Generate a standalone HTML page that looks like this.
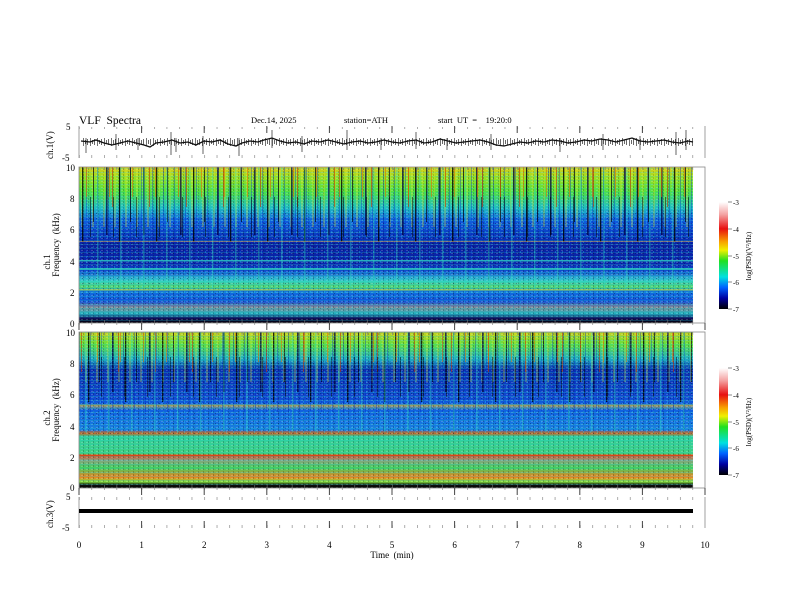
<!DOCTYPE html>
<html><head><meta charset="utf-8"><style>
html,body{margin:0;padding:0;background:#fff}
svg{display:block}
text{font-family:"Liberation Serif",serif;fill:#000;white-space:pre}
</style></head><body>
<svg width="792" height="612" viewBox="0 0 792 612" xmlns="http://www.w3.org/2000/svg" xml:space="preserve">
<defs>
<linearGradient id="cb" x1="0" y1="0" x2="0" y2="1">
<stop offset="0" stop-color="#fff"/><stop offset=".12" stop-color="#f4a0a0"/><stop offset=".25" stop-color="#e81010"/><stop offset=".37" stop-color="#f8a000"/><stop offset=".45" stop-color="#f0f000"/><stop offset=".55" stop-color="#20e020"/><stop offset=".7" stop-color="#00e0e0"/><stop offset=".8" stop-color="#0060ff"/><stop offset=".9" stop-color="#0000a0"/><stop offset="1" stop-color="#000"/>
</linearGradient>
<linearGradient id="s1" x1="0" y1="0" x2="0" y2="1">
<stop offset="0" stop-color="#d8c820"/><stop offset=".06" stop-color="#a0e020"/><stop offset=".16" stop-color="#50e040"/><stop offset=".26" stop-color="#20c0c0"/><stop offset=".34" stop-color="#1060e0"/><stop offset=".46" stop-color="#0830b8"/><stop offset=".5" stop-color="#0a20a0"/><stop offset=".62" stop-color="#0a28b0"/><stop offset=".67" stop-color="#1050d0"/><stop offset=".72" stop-color="#30c0d0"/><stop offset=".77" stop-color="#50d870"/><stop offset=".8" stop-color="#1070e0"/><stop offset=".86" stop-color="#1050d8"/><stop offset=".9" stop-color="#808c98"/><stop offset=".94" stop-color="#20b0c0"/><stop offset=".97" stop-color="#101060"/><stop offset="1" stop-color="#000"/>
</linearGradient>
<linearGradient id="s2" x1="0" y1="0" x2="0" y2="1">
<stop offset="0" stop-color="#c8d020"/><stop offset=".08" stop-color="#60e040"/><stop offset=".17" stop-color="#20b0c0"/><stop offset=".24" stop-color="#0a30b0"/><stop offset=".42" stop-color="#1048d0"/><stop offset=".46" stop-color="#1060e0"/><stop offset=".47" stop-color="#a0a060"/><stop offset=".5" stop-color="#1060e0"/><stop offset=".63" stop-color="#1880e0"/><stop offset=".645" stop-color="#e05010"/><stop offset=".67" stop-color="#30d0a0"/><stop offset=".78" stop-color="#40d080"/><stop offset=".79" stop-color="#e04010"/><stop offset=".82" stop-color="#90a080"/><stop offset=".87" stop-color="#40d060"/><stop offset=".93" stop-color="#f08020"/><stop offset=".96" stop-color="#80e040"/><stop offset=".98" stop-color="#101010"/><stop offset="1" stop-color="#000"/>
</linearGradient>
<pattern id="va" width="37" height="400" patternUnits="userSpaceOnUse" x="79" y="167"><rect x="3" width="1.3" height="75" fill="#000" opacity=".8"/><rect x="14" width="1" height="55" fill="#001" opacity=".7"/><rect x="27" width="1.6" height="68" fill="#000040" opacity=".75"/><rect x="33" width="1" height="40" fill="#c03000" opacity=".6"/></pattern>
<pattern id="vb" width="23" height="400" patternUnits="userSpaceOnUse" x="79" y="167"><rect x="7" width="1" height="30" fill="#e07000" opacity=".6"/><rect x="18" width="1.5" height="120" fill="#30e0c0" opacity=".35"/><rect x="11" y="30" width="1" height="40" fill="#000" opacity=".5"/></pattern>
<pattern id="vc" width="11" height="400" patternUnits="userSpaceOnUse" x="79" y="167"><rect x="2" width="2" height="60" fill="#f0f020" opacity=".25"/><rect x="7" width="1" height="90" fill="#0020c0" opacity=".35"/></pattern>
<pattern id="va2" width="37" height="400" patternUnits="userSpaceOnUse" x="85" y="332"><rect x="3" width="1.3" height="70" fill="#000" opacity=".8"/><rect x="14" width="1" height="50" fill="#001" opacity=".7"/><rect x="27" width="1.6" height="60" fill="#000040" opacity=".75"/><rect x="33" width="1" height="40" fill="#c03000" opacity=".6"/></pattern>
<pattern id="vb2" width="23" height="400" patternUnits="userSpaceOnUse" x="90" y="332"><rect x="7" width="1" height="30" fill="#e07000" opacity=".6"/><rect x="18" width="1.5" height="100" fill="#30e0c0" opacity=".35"/><rect x="11" y="25" width="1" height="40" fill="#000" opacity=".5"/></pattern>
<pattern id="vc2" width="11" height="400" patternUnits="userSpaceOnUse" x="83" y="332"><rect x="2" width="2" height="50" fill="#f0f020" opacity=".25"/><rect x="7" width="1" height="80" fill="#0020c0" opacity=".35"/></pattern>
<pattern id="h1" width="53" height="4" patternUnits="userSpaceOnUse"><rect width="53" height="1" fill="#20d0d0" opacity=".25"/></pattern>
<pattern id="n1" width="5" height="3" patternUnits="userSpaceOnUse"><rect x="1" y="1" width="2" height="1" fill="#fff" opacity=".18"/><rect x="3" y="0" width="1" height="2" fill="#000" opacity=".2"/></pattern>
<pattern id="n2" width="7" height="5" patternUnits="userSpaceOnUse"><rect x="2" y="1" width="1" height="2" fill="#30e0ff" opacity=".3"/><rect x="5" y="3" width="1" height="1" fill="#000030" opacity=".35"/></pattern>
<pattern id="mt" width="12.52" height="5" patternUnits="userSpaceOnUse" x="79"><rect width=".6" height="3" fill="#777"/></pattern>
<pattern id="mb" width="12.52" height="5" patternUnits="userSpaceOnUse" x="79" y="0"><rect y="2" width=".6" height="3" fill="#777"/></pattern>
<pattern id="jit" width="7" height="14" patternUnits="userSpaceOnUse" x="79" y="135"><rect x="1" y="4" width=".8" height="6" fill="#111"/><rect x="4" y="3" width=".8" height="8" fill="#222"/><rect x="6" y="5" width=".8" height="4" fill="#111"/></pattern>
</defs>

<text x="79" y="124" font-size="11.5">VLF  Spectra</text>
<text x="251" y="123" font-size="8.5">Dec.14, 2025</text>
<text x="344" y="123" font-size="8.5">station=ATH</text>
<text x="438" y="123" font-size="8.5">start  UT  =    19:20:0</text>

<g stroke="#888" stroke-width=".8" fill="none"><line x1="79" y1="126" x2="79" y2="158"/><line x1="705" y1="126" x2="705" y2="158"/></g>
<rect x="79" y="126" width="626" height="3" fill="url(#mb)"/>
<rect x="79" y="155" width="626" height="3" fill="url(#mt)"/>
<text x="66" y="130" font-size="9">5</text><text x="62" y="161" font-size="9">-5</text>
<text transform="translate(53,159) rotate(-90)" font-size="9">ch.1(V)</text>
<rect x="81" y="136" width="612" height="12" fill="url(#jit)" opacity=".8"/>
<polyline fill="none" stroke="#111" stroke-width="1.3" points="81,141 90,142 96,140 104,143 112,145 120,143 128,141 136,143 144,145 150,147 156,143 164,142 172,140 180,143 188,142 196,145 204,141 212,142 220,140 228,144 236,146 242,143 250,141 258,142 264,140 272,138 280,141 288,143 296,142 304,144 312,141 320,142 328,140 336,142 344,144 352,142 360,141 368,143 376,142 384,140 392,142 400,143 408,141 416,140 424,143 432,142 440,139 448,141 456,143 464,142 472,141 480,140 488,142 496,145 504,146 512,144 520,142 528,143 536,141 544,142 552,140 560,141 568,143 576,142 584,140 592,141 600,139 608,140 616,142 624,140 632,138 640,141 648,142 656,141 664,140 672,142 680,143 688,141 693,142"/>
<g stroke="#222" stroke-width=".7">
<line x1="86" y1="138" x2="86" y2="153"/><line x1="116" y1="134" x2="116" y2="150"/><line x1="138" y1="138" x2="138" y2="150"/><line x1="171" y1="132" x2="171" y2="155"/><line x1="176" y1="138" x2="176" y2="152"/><line x1="203" y1="136" x2="203" y2="154"/><line x1="239" y1="138" x2="239" y2="156"/><line x1="272" y1="130" x2="272" y2="148"/><line x1="302" y1="136" x2="302" y2="152"/><line x1="347" y1="130" x2="347" y2="150"/><line x1="381" y1="138" x2="381" y2="150"/><line x1="416" y1="132" x2="416" y2="149"/><line x1="447" y1="138" x2="447" y2="150"/><line x1="491" y1="134" x2="491" y2="150"/><line x1="560" y1="138" x2="560" y2="152"/><line x1="603" y1="134" x2="603" y2="150"/><line x1="640" y1="136" x2="640" y2="150"/><line x1="676" y1="132" x2="676" y2="155"/><line x1="686" y1="130" x2="686" y2="150"/>
</g>

<rect x="79" y="167" width="614" height="156" fill="url(#s1)"/>
<rect x="79" y="167" width="614" height="156" fill="url(#n1)"/>
<rect x="79" y="210" width="614" height="100" fill="url(#n2)"/>
<rect x="79" y="167" width="614" height="156" fill="url(#h1)"/>
<rect x="79" y="167" width="614" height="120" fill="url(#vc)"/>
<rect x="79" y="167" width="614" height="120" fill="url(#va)"/>
<rect x="79" y="167" width="614" height="120" fill="url(#vb)"/>
<g fill="#30d8c0" opacity=".7"><rect x="79" y="260" width="614" height="1.5"/><rect x="79" y="268" width="614" height="2"/><rect x="79" y="281" width="614" height="1.5"/></g>
<rect x="79" y="241" width="614" height="1" fill="#c0a060" opacity=".6"/>
<rect x="79" y="289" width="614" height="1.5" fill="#e0e030" opacity=".5"/>

<rect x="79" y="332" width="614" height="156" fill="url(#s2)"/>
<rect x="79" y="332" width="614" height="156" fill="url(#n1)"/>
<rect x="79" y="360" width="614" height="75" fill="url(#n2)"/>
<rect x="79" y="332" width="614" height="100" fill="url(#vc2)"/>
<rect x="79" y="332" width="614" height="100" fill="url(#va2)"/>
<rect x="79" y="332" width="614" height="100" fill="url(#vb2)"/>
<rect x="79" y="332" width="614" height="156" fill="url(#h1)"/>
<g fill="none" stroke="#888" stroke-width=".8">
<rect x="79" y="167" width="626" height="156"/><rect x="79" y="332" width="626" height="156"/>
<line x1="79" y1="497" x2="79" y2="528"/><line x1="705" y1="497" x2="705" y2="528"/>
</g>
<rect x="79" y="167" width="626" height="3" fill="url(#mb)"/><rect x="79" y="320" width="626" height="3" fill="url(#mt)"/>
<rect x="79" y="332" width="626" height="3" fill="url(#mb)"/><rect x="79" y="485" width="626" height="3" fill="url(#mt)"/>
<rect x="79" y="497" width="626" height="3" fill="url(#mb)"/><rect x="79" y="525" width="626" height="3" fill="url(#mt)"/>
<rect x="79" y="323" width="626" height="3" fill="url(#mb)"/><rect x="79" y="488" width="626" height="3" fill="url(#mb)"/>
<g stroke="#444" stroke-width="1">
<path d="M79 323v7M141.6 323v7M204.2 323v7M266.8 323v7M329.4 323v7M392 323v7M454.6 323v7M517.2 323v7M579.8 323v7M642.4 323v7M705 323v7"/>
<path d="M79 488v7M141.6 488v7M204.2 488v7M266.8 488v7M329.4 488v7M392 488v7M454.6 488v7M517.2 488v7M579.8 488v7M642.4 488v7M705 488v7"/>
<path d="M141.6 528v-7M204.2 528v-7M266.8 528v-7M329.4 528v-7M392 528v-7M454.6 528v-7M517.2 528v-7M579.8 528v-7M642.4 528v-7"/>
<path d="M141.6 126v7M204.2 126v7M266.8 126v7M329.4 126v7M392 126v7M454.6 126v7M517.2 126v7M579.8 126v7M642.4 126v7"/>
</g>
<g font-size="9">
<text x="66" y="171">10</text><text x="70" y="202">8</text><text x="70" y="233">6</text><text x="70" y="265">4</text><text x="70" y="296">2</text><text x="70" y="327">0</text>
<text x="66" y="336">10</text><text x="70" y="367">8</text><text x="70" y="398">6</text><text x="70" y="430">4</text><text x="70" y="461">2</text><text x="70" y="491">0</text>
<text x="66" y="500">5</text><text x="62" y="531">-5</text>
</g>
<text transform="translate(50,262) rotate(-90)" font-size="9" text-anchor="middle">ch.1</text>
<text transform="translate(59,245) rotate(-90)" font-size="9" text-anchor="middle">Frequency  (kHz)</text>
<text transform="translate(50,418) rotate(-90)" font-size="9" text-anchor="middle">ch.2</text>
<text transform="translate(59,410) rotate(-90)" font-size="9" text-anchor="middle">Frequency  (kHz)</text>
<text transform="translate(53,528) rotate(-90)" font-size="9">ch.3(V)</text>
<rect x="79" y="509" width="614" height="4" fill="#000"/>
<g font-size="9" text-anchor="middle">
<text x="79" y="548">0</text><text x="141.6" y="548">1</text><text x="204.2" y="548">2</text><text x="266.8" y="548">3</text><text x="329.4" y="548">4</text><text x="392" y="548">5</text><text x="454.6" y="548">6</text><text x="517.2" y="548">7</text><text x="579.8" y="548">8</text><text x="642.4" y="548">9</text><text x="705" y="548">10</text>
<text x="392" y="558">Time  (min)</text>
</g>
<rect x="719" y="202" width="9" height="107" fill="url(#cb)"/>
<rect x="719" y="368" width="9" height="107" fill="url(#cb)"/>
<g stroke="#666" stroke-width=".7"><path d="M728 202h4M728 229h4M728 256h4M728 282h4M728 309h4M728 368h4M728 395h4M728 422h4M728 448h4M728 475h4"/></g>
<g font-size="7">
<text x="733" y="205">-3</text><text x="733" y="232">-4</text><text x="733" y="259">-5</text><text x="733" y="285">-6</text><text x="733" y="312">-7</text>
<text x="733" y="371">-3</text><text x="733" y="398">-4</text><text x="733" y="425">-5</text><text x="733" y="451">-6</text><text x="733" y="478">-7</text>
</g>
<text transform="translate(751,256) rotate(-90)" font-size="7" text-anchor="middle">log(PSD)(V²/Hz)</text>
<text transform="translate(751,422) rotate(-90)" font-size="7" text-anchor="middle">log(PSD)(V²/Hz)</text>
</svg>
</body></html>
